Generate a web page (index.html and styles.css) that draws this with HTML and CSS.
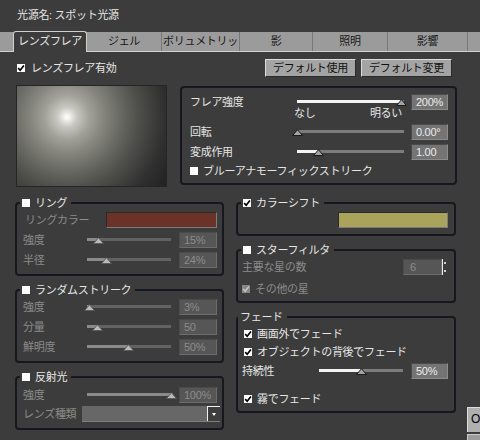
FILE: index.html
```html
<!DOCTYPE html>
<html lang="ja">
<head>
<meta charset="utf-8">
<title>光源</title>
<link rel="stylesheet" href="styles.css">
</head>
<body>
<div class="title">光源名: スポット光源</div>
<div class="tabs">
  <div class="tab active">レンズフレア</div>
  <div class="tab t2">ジェル</div>
  <div class="tab t3">ボリュメトリッ</div>
  <div class="tab t4">影</div>
  <div class="tab t5">照明</div>
  <div class="tab t6">影響</div>
</div>

<div class="toprow">
  <div class="check top"><span class="cb"><svg viewBox="0 0 8 8" width="8" height="8"><path d="M1.2 4.1 L3.2 6.3 L6.9 1.5" fill="none" stroke="#000" stroke-width="1.7"/></svg></span>レンズフレア有効</div>
  <div class="btns">
    <div class="btn">デフォルト使用</div>
    <div class="btn">デフォルト変更</div>
  </div>
</div>

<div class="midrow">
  <div class="preview"></div>
  <div class="flare">
    <div class="row">
      <span class="flabel">フレア強度</span>
      <div class="slider s107"><div class="track"><div class="fill" style="width:98%"></div></div><svg class="thumb" style="left:98%" viewBox="0 0 11 7"><path d="M5.5 0.7 L10.4 6.5 L0.6 6.5 Z" fill="#a3a3a3" stroke="#1c1c1c"/></svg></div>
      <span class="val">200%</span>
    </div>
    <div class="scale"><span>なし</span><span>明るい</span></div>
    <div class="row mt5">
      <span class="flabel">回転</span>
      <div class="slider s107"><div class="track"><div class="fill" style="width:0%"></div></div><svg class="thumb" style="left:0%" viewBox="0 0 11 7"><path d="M5.5 0.7 L10.4 6.5 L0.6 6.5 Z" fill="#a3a3a3" stroke="#1c1c1c"/></svg></div>
      <span class="val">0.00°</span>
    </div>
    <div class="row mt4">
      <span class="flabel">変成作用</span>
      <div class="slider s107"><div class="track"><div class="fill" style="width:20%"></div></div><svg class="thumb" style="left:20%" viewBox="0 0 11 7"><path d="M5.5 0.7 L10.4 6.5 L0.6 6.5 Z" fill="#a3a3a3" stroke="#1c1c1c"/></svg></div>
      <span class="val">1.00</span>
    </div>
    <div class="check crow mt4"><span class="cb"></span>ブルーアナモーフィックストリーク</div>
  </div>
</div>

<div class="groups">
  <div class="col left">
    <fieldset class="grp">
      <legend><span class="lg"><span class="cb"></span>リング</span></legend>
      <div class="gb lgb">
        <div class="row"><span class="dim ind">リングカラー</span><span class="swatch red"></span></div>
        <div class="row mt4">
          <span class="llab dim">強度</span>
          <div class="slider s84 dis"><div class="track"><div class="fill" style="width:14%"></div></div><svg class="thumb" style="left:14%" viewBox="0 0 11 7"><path d="M5.5 0.7 L10.4 6.5 L0.6 6.5 Z" fill="#bababa" stroke="#5c5c5c"/></svg></div>
          <span class="val dv">15%</span>
        </div>
        <div class="row mt4">
          <span class="llab dim">半径</span>
          <div class="slider s84 dis"><div class="track"><div class="fill" style="width:23%"></div></div><svg class="thumb" style="left:23%" viewBox="0 0 11 7"><path d="M5.5 0.7 L10.4 6.5 L0.6 6.5 Z" fill="#bababa" stroke="#5c5c5c"/></svg></div>
          <span class="val dv">24%</span>
        </div>
      </div>
    </fieldset>

    <fieldset class="grp">
      <legend><span class="lg"><span class="cb"></span>ランダムストリーク</span></legend>
      <div class="gb lgb">
        <div class="row">
          <span class="llab dim">強度</span>
          <div class="slider s84 dis"><div class="track"><div class="fill" style="width:3%"></div></div><svg class="thumb" style="left:3%" viewBox="0 0 11 7"><path d="M5.5 0.7 L10.4 6.5 L0.6 6.5 Z" fill="#bababa" stroke="#5c5c5c"/></svg></div>
          <span class="val dv">3%</span>
        </div>
        <div class="row mt4">
          <span class="llab dim">分量</span>
          <div class="slider s84 dis"><div class="track"><div class="fill" style="width:12%"></div></div><svg class="thumb" style="left:12%" viewBox="0 0 11 7"><path d="M5.5 0.7 L10.4 6.5 L0.6 6.5 Z" fill="#bababa" stroke="#5c5c5c"/></svg></div>
          <span class="val dv">50</span>
        </div>
        <div class="row mt4">
          <span class="llab dim">鮮明度</span>
          <div class="slider s84 dis"><div class="track"><div class="fill" style="width:49%"></div></div><svg class="thumb" style="left:49%" viewBox="0 0 11 7"><path d="M5.5 0.7 L10.4 6.5 L0.6 6.5 Z" fill="#bababa" stroke="#5c5c5c"/></svg></div>
          <span class="val dv">50%</span>
        </div>
      </div>
    </fieldset>

    <fieldset class="grp pt3">
      <legend><span class="lg"><span class="cb"></span>反射光</span></legend>
      <div class="gb lgb">
        <div class="row">
          <span class="llab dim">強度</span>
          <div class="slider s86 dis"><div class="track"><div class="fill" style="width:98%"></div></div><svg class="thumb" style="left:98%" viewBox="0 0 11 7"><path d="M5.5 0.7 L10.4 6.5 L0.6 6.5 Z" fill="#bababa" stroke="#5c5c5c"/></svg></div>
          <span class="val dv">100%</span>
        </div>
        <div class="row mt3">
          <span class="ddlab dim">レンズ種類</span>
          <div class="dd"><div class="ddb"><i></i></div></div>
        </div>
      </div>
    </fieldset>
  </div>

  <div class="col right">
    <fieldset class="grp">
      <legend><span class="lg"><span class="cb"><svg viewBox="0 0 8 8" width="8" height="8"><path d="M1.2 4.1 L3.2 6.3 L6.9 1.5" fill="none" stroke="#000" stroke-width="1.7"/></svg></span>カラーシフト</span></legend>
      <div class="gb rgb">
        <div class="row"><span class="swatch olive"></span></div>
      </div>
    </fieldset>

    <fieldset class="grp pb5">
      <legend><span class="lg"><span class="cb"></span>スターフィルタ</span></legend>
      <div class="gb rgb">
        <div class="row">
          <span class="dim">主要な星の数</span>
          <div class="spin"><span class="sval">6</span><span class="arr"><i class="up"></i><i class="dn"></i></span></div>
        </div>
        <div class="check crow mt7 dim"><span class="cb dcb"><svg viewBox="0 0 8 8" width="8" height="8"><path d="M1.2 4.1 L3.2 6.3 L6.9 1.5" fill="none" stroke="#c4c4c4" stroke-width="1.5"/></svg></span>その他の星</div>
      </div>
    </fieldset>

    <fieldset class="grp pt3 pb5 fade">
      <legend><span class="lg">フェード</span></legend>
      <div class="gb rgb">
        <div class="check crow ci"><span class="cb"><svg viewBox="0 0 8 8" width="8" height="8"><path d="M1.2 4.1 L3.2 6.3 L6.9 1.5" fill="none" stroke="#000" stroke-width="1.7"/></svg></span>画面外でフェード</div>
        <div class="check crow ci mt4"><span class="cb"><svg viewBox="0 0 8 8" width="8" height="8"><path d="M1.2 4.1 L3.2 6.3 L6.9 1.5" fill="none" stroke="#000" stroke-width="1.7"/></svg></span>オブジェクトの背後でフェード</div>
        <div class="row mt4">
          <span class="plab">持続性</span>
          <div class="slider s84"><div class="track"><div class="fill" style="width:50%"></div></div><svg class="thumb" style="left:50%" viewBox="0 0 11 7"><path d="M5.5 0.7 L10.4 6.5 L0.6 6.5 Z" fill="#a3a3a3" stroke="#1c1c1c"/></svg></div>
          <span class="val">50%</span>
        </div>
        <div class="check crow ci mt13"><span class="cb"><svg viewBox="0 0 8 8" width="8" height="8"><path d="M1.2 4.1 L3.2 6.3 L6.9 1.5" fill="none" stroke="#000" stroke-width="1.7"/></svg></span>霧でフェード</div>
      </div>
    </fieldset>
  </div>

  <div class="side">
    <div class="okbtn">OK</div>
    <div class="okbtn2"></div>
  </div>
</div>
</body>
</html>
```

FILE: styles.css
```css
html, body {
  margin: 0;
  padding: 0;
  overflow: hidden;
}
body {
  width: 480px;
  height: 440px;
  background: #3c3c3c;
  color: #e6e6e6;
  font-family: "Liberation Sans", "Noto Sans CJK JP", sans-serif;
  font-size: 11px;
  line-height: 14px;
  letter-spacing: -0.3px;
}

.title {
  padding: 8px 0 0 17px;
  height: 14px;
}

/* tabs */
.tabs {
  display: flex;
  align-items: flex-start;
  margin-top: 10px;
  height: 19px;
  background: #9b9b9b;
  border-bottom: 1px solid #cfcfcf;
  padding-left: 13px;
  color: #161616;
}
.tab {
  flex: none;
  box-sizing: border-box;
  height: 19px;
  line-height: 19px;
  text-align: center;
  border-right: 1px solid #787878;
}
.tab.active {
  width: 74px;
  height: 21px;
  margin-top: -1px;
  line-height: 19px;
  background: #3c3c3c;
  color: #e8e8e8;
  border: 1px solid #cfcfcf;
  border-bottom: 0;
  border-radius: 3px 3px 0 0;
}
.t2 { width: 75px; }
.t3 { width: 78px; }
.t4 { width: 73px; }
.t5 { width: 75px; }
.t6 { width: 80px; }

/* checkbox */
.check {
  display: flex;
  align-items: center;
  gap: 5px;
}
.check.top { gap: 6px; }
.crow { height: 14px; }
.ci { padding-left: 2px; }
.cb {
  flex: none;
  display: block;
  width: 8px;
  height: 8px;
  background: #ffffff;
}
.cb svg { display: block; }
.cb.dcb { background: #868686; }

/* top row */
.toprow {
  display: flex;
  align-items: center;
  height: 18px;
  margin-top: 7px;
  padding: 0 28px 0 17px;
}
.btns {
  margin-left: auto;
  display: flex;
  gap: 5px;
}
.btn {
  width: 91px;
  height: 18px;
  box-sizing: border-box;
  background: #a4a4a4;
  color: #111111;
  text-align: center;
  line-height: 16px;
  border: 1px solid;
  border-color: #dcdcdc #2a2a2a #2a2a2a #dcdcdc;
}

/* preview + flare */
.midrow {
  display: flex;
  align-items: flex-start;
  margin-top: 8px;
  padding-left: 16px;
}
.preview {
  flex: none;
  width: 151px;
  height: 102px;
  box-sizing: border-box;
  border: 1px solid #252525;
  background: radial-gradient(circle at 50px 31px,
    #ffffff 0, #f0f0ec 3px, #c8c8c0 10px, #a2a29a 22px, #86867f 36px,
    #6c6c66 52px, #4e4e4a 72px, #303030 98px, #181816 135px);
}
.flare {
  flex: none;
  width: 277px;
  margin: 1px 0 0 13px;
  box-sizing: border-box;
  border: 2px solid #17171f;
  border-radius: 4px;
  padding: 6px 7px 5px 8px;
}
.row {
  display: flex;
  align-items: center;
  height: 16px;
}
.flabel { width: 107px; flex: none; }
.scale {
  display: flex;
  justify-content: space-between;
  width: 108px;
  height: 12px;
  line-height: 12px;
  margin: -3px 0 0 104px;
}
.mt3 { margin-top: 3px; }
.mt4 { margin-top: 4px; }
.mt5 { margin-top: 5px; }
.mt7 { margin-top: 7px; }
.mt13 { margin-top: 13px; }

/* slider */
.slider {
  position: relative;
  flex: none;
  height: 16px;
}
.s107 { width: 107px; }
.s84 { width: 84px; }
.s86 { width: 86px; }
.track {
  position: absolute;
  left: 0;
  right: 0;
  top: 6px;
  height: 3px;
  background: #7c7c7c;
  overflow: hidden;
}
.fill {
  height: 100%;
  background: #f4f4f4;
}
.slider.dis .track { background: #626262; }
.slider.dis .fill { background: #8a8a8a; }
.thumb {
  position: absolute;
  top: 5px;
  width: 11px;
  height: 7px;
  margin-left: -5.5px;
  display: block;
}

/* value boxes */
.val {
  flex: none;
  margin-left: auto;
  width: 37px;
  height: 16px;
  box-sizing: border-box;
  padding-left: 4px;
  line-height: 14px;
  background: #747474;
  color: #ececec;
  border: 1px solid;
  border-color: #4a4a4a #8c8c8c #8c8c8c #4a4a4a;
}
.val.dv {
  width: 38px;
  background: #565656;
  color: #8c8c8c;
  border-color: #4a4a4a #6c6c6c #6c6c6c #4a4a4a;
}
.dim { color: #8b8b8b; }

/* groups */
.groups {
  display: flex;
  align-items: flex-start;
  margin-top: 9px;
  padding-left: 15px;
}
.col {
  flex: none;
  display: flex;
  flex-direction: column;
  gap: 7px;
}
.left { width: 209px; }
.right { width: 220px; margin-left: 12px; }

.grp {
  margin: 0;
  padding: 2px 0 6px;
  min-width: 0;
  border: 2px solid #17171f;
  border-radius: 4px;
}
.grp.pt3 { padding-top: 3px; }
.grp.pb5 { padding-bottom: 5px; }
.grp legend {
  margin-left: 3px;
  padding: 0 4px 0 2px;
  height: 14px;
  line-height: 14px;
}
.grp.fade legend { margin-left: 0; }
.lg {
  display: flex;
  align-items: center;
  gap: 5px;
}
.lgb { padding: 0 5px 0 6px; }
.rgb { padding: 0 6px 0 4px; }
.llab { width: 64px; flex: none; }
.ind { padding-left: 2px; }
.plab { width: 77px; flex: none; }
.ddlab { width: 59px; flex: none; }

.swatch {
  margin-left: auto;
  height: 16px;
  box-sizing: border-box;
  border: 1px solid;
  border-color: #2a2a2a #7c7c7c #7c7c7c #2a2a2a;
}
.swatch.red { width: 111px; background: #6b3327; }
.swatch.olive { width: 110px; background: #aaa35c; }

/* dropdown */
.dd {
  flex: 1;
  height: 16px;
  margin-right: -3px;
  box-sizing: border-box;
  background: #676767;
  border-bottom: 1px solid #7e7e7e;
  display: flex;
  justify-content: flex-end;
}
.ddb {
  width: 13px;
  height: 15px;
  box-sizing: border-box;
  border-left: 1px solid #f0f0f0;
  border-top: 1px solid #f0f0f0;
  background: #3e3e3e;
  display: flex;
  align-items: center;
  justify-content: center;
}
.ddb i {
  display: block;
  width: 0;
  height: 0;
  border-left: 2px solid transparent;
  border-right: 2px solid transparent;
  border-top: 3px solid #ffffff;
}

/* spinner */
.spin {
  margin-left: auto;
  margin-right: 1px;
  display: flex;
  height: 16px;
}
.sval {
  width: 39px;
  box-sizing: border-box;
  padding-left: 6px;
  line-height: 14px;
  background: #565656;
  color: #8c8c8c;
  border: 1px solid;
  border-color: #4a4a4a #6c6c6c #6c6c6c #4a4a4a;
}
.arr {
  width: 5px;
  box-sizing: border-box;
  border-left: 1px solid #eeeeee;
  display: flex;
  flex-direction: column;
  justify-content: space-between;
  align-items: center;
  padding: 3px 0;
}
.arr i {
  display: block;
  width: 2px;
  height: 2px;
  background: #d0d0d0;
}

/* partly visible button */
.side {
  flex: none;
  width: 60px;
  margin: 211px 0 0 11px;
}
.okbtn {
  height: 25px;
  box-sizing: border-box;
  background: #b0b0b0;
  border-top: 1px solid #dedede;
  border-left: 1px solid #dedede;
  padding-left: 3px;
  line-height: 23px;
  color: #000000;
  font-size: 12px;
  letter-spacing: 0;
}
.okbtn2 {
  height: 20px;
  margin-top: 2px;
  background: #9c9c9c;
  border-top: 1px solid #cccccc;
  border-left: 1px solid #cccccc;
}
```
